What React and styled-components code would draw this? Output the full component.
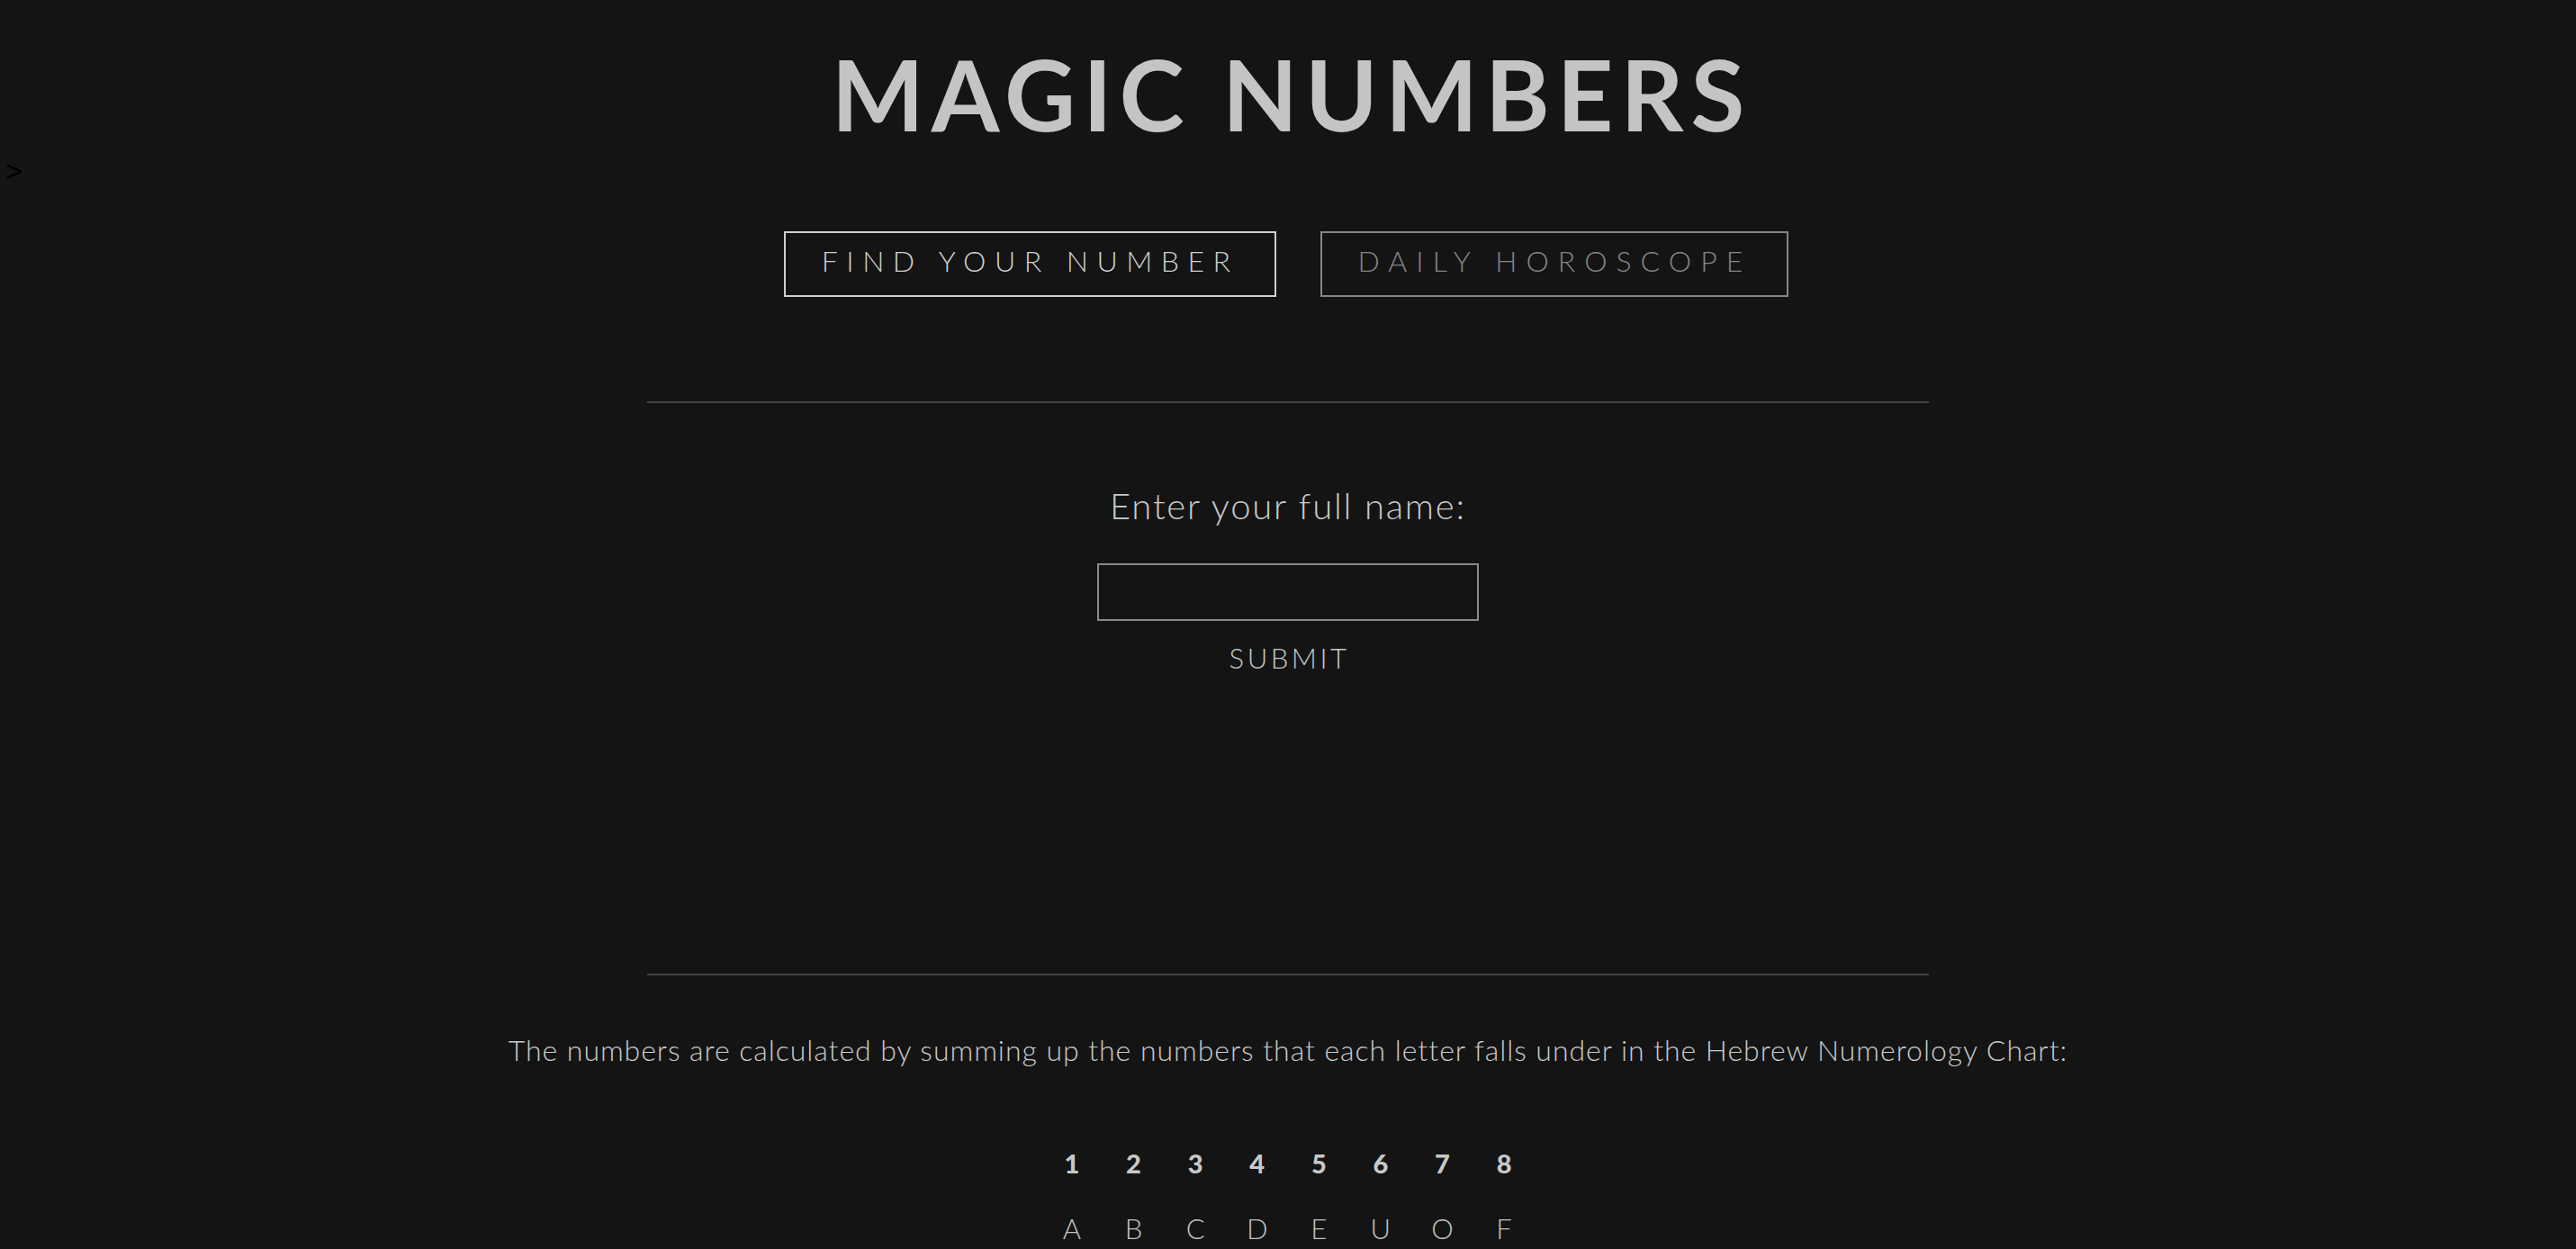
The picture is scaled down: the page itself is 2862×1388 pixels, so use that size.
import React, { useState } from 'react';
import styled, { createGlobalStyle } from 'styled-components';

const GlobalStyle = createGlobalStyle`
  html, body {
    margin: 0;
    padding: 0;
    background-color: #141414;
  }
  body {
    font-family: 'Lato', 'Noto Sans', sans-serif;
    color: #c6c6c6;
  }
`;

const Page = styled.div`
  display: flex;
  flex-direction: column;
  align-items: center;
  padding-top: 49px;
  min-height: 1388px;
  box-sizing: border-box;
`;

const Title = styled.h1`
  margin: 0;
  font-family: 'Lato', sans-serif;
  font-weight: 700;
  font-size: 109px;
  line-height: 109px;
  letter-spacing: 8px;
  margin-right: -8px;
  color: #c4c4c4;
`;

const Stray = styled.div`
  align-self: stretch;
  margin-top: 16px;
  padding-left: 6px;
  font-family: 'Liberation Sans', Arial, sans-serif;
  font-size: 32px;
  line-height: 32px;
  color: #000;
`;

const Tabs = styled.nav`
  display: flex;
  gap: 49px;
  margin-top: 51px;
  margin-left: -4px;
`;

const Tab = styled.button`
  height: 73px;
  box-sizing: border-box;
  display: inline-flex;
  align-items: center;
  padding: 0 39px 8px 40px;
  background: transparent;
  border: 2px solid ${props => (props.active ? '#cfcfcf' : '#858585')};
  color: ${props => (props.active ? '#cfcfcf' : '#858585')};
  font-family: 'Lato', sans-serif;
  font-weight: 300;
  font-size: 32px;
  line-height: 40px;
  letter-spacing: ${props => (props.active ? '9.5px' : '10px')};
  cursor: pointer;
`;

const Rule = styled.hr`
  width: 1424px;
  height: 2px;
  margin: 0;
  border: none;
  background-color: #444;
`;

const TopRule = styled(Rule)`
  margin-top: 116px;
`;

const FormSection = styled.form`
  height: 634px;
  box-sizing: border-box;
  padding-top: 90px;
  display: flex;
  flex-direction: column;
  align-items: center;
`;

const Label = styled.label`
  font-weight: 300;
  font-size: 40px;
  line-height: 48px;
  letter-spacing: 1.8px;
  color: #cacaca;
`;

const NameInput = styled.input`
  margin-top: 40px;
  width: 424px;
  height: 64px;
  box-sizing: border-box;
  background: transparent;
  border: 2px solid #8a8a8a;
  outline: none;
  color: #cacaca;
  font-family: 'Lato', sans-serif;
  font-size: 28px;
  padding: 0 12px;
`;

const Submit = styled.button`
  margin-top: 21px;
  padding: 0 0 0 3px;
  background: transparent;
  border: none;
  color: #c6c6c6;
  font-family: 'Lato', sans-serif;
  font-weight: 300;
  font-size: 31px;
  line-height: 40px;
  letter-spacing: 3.5px;
  cursor: pointer;
`;

const Explain = styled.p`
  margin: 63px 0 0;
  font-weight: 300;
  font-size: 32px;
  line-height: 40px;
  letter-spacing: 0.95px;
  color: #cacaca;
`;

const Chart = styled.div`
  margin-top: 86px;
  display: grid;
  grid-template-columns: repeat(8, 68.6px);
  row-gap: 32px;
  justify-items: center;
`;

const Cell = styled.div`
  font-size: ${props => (props.head ? '29px' : '31px')};
  font-weight: ${props => (props.head ? 900 : 300)};
  line-height: 40px;
  color: ${props => (props.head ? '#c8c8c8' : '#c2c2c2')};
`;

const chart = [
  ['1', '2', '3', '4', '5', '6', '7', '8'],
  ['A', 'B', 'C', 'D', 'E', 'U', 'O', 'F'],
  ['I', 'K', 'G', 'M', 'H', 'V', 'Z', 'P'],
  ['J', 'R', 'L', 'T', 'N', 'W', '', ''],
  ['Q', '', 'S', '', 'X', '', '', ''],
  ['Y', '', '', '', '', '', '', ''],
];

const App = () => {
  const [tab, setTab] = useState('number');
  const [name, setName] = useState('');

  return (
    <>
      <GlobalStyle />
      <Page>
        <Title>MAGIC NUMBERS</Title>
        <Stray>&gt;</Stray>
        <Tabs>
          <Tab active={tab === 'number'} onClick={() => setTab('number')}>
            FIND YOUR NUMBER
          </Tab>
          <Tab active={tab === 'horoscope'} onClick={() => setTab('horoscope')}>
            DAILY HOROSCOPE
          </Tab>
        </Tabs>
        <TopRule />
        <FormSection onSubmit={e => e.preventDefault()}>
          <Label htmlFor="full-name">Enter your full name:</Label>
          <NameInput id="full-name" value={name} onChange={e => setName(e.target.value)} />
          <Submit type="submit">SUBMIT</Submit>
        </FormSection>
        <Rule />
        <Explain>
          The numbers are calculated by summing up the numbers that each letter falls under in the
          Hebrew Numerology Chart:
        </Explain>
        <Chart>
          {chart.map((row, r) =>
            row.map((value, c) => (
              <Cell key={`${r}-${c}`} head={r === 0}>
                {value}
              </Cell>
            ))
          )}
        </Chart>
      </Page>
    </>
  );
};

export default App;
